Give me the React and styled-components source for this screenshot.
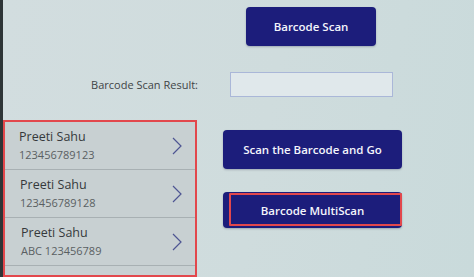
import styled, { createGlobalStyle } from 'styled-components'

const Global = createGlobalStyle`
  html, body {
    margin: 0;
    padding: 0;
    background: #cfdcdd;
  }
  * { box-sizing: border-box; }
`

const Screen = styled.div`
  width: 474px;
  height: 277px;
  overflow: hidden;
  background: linear-gradient(100deg, #d2dddf 0%, #cfdcdd 55%, #c9dadb 100%);
  border-left: 3px solid #2e3537;
  font-family: "Open Sans", "Noto Sans", sans-serif;
  display: flex;
  flex-direction: column;
`

const TopRow = styled.div`
  padding: 7px 0 0 243px;
`

const Button = styled.button`
  display: flex;
  align-items: center;
  justify-content: center;
  width: ${(p) => p.$w}px;
  height: ${(p) => p.$h}px;
  background: #1c1d7b;
  color: #f4f5fb;
  border: none;
  border-radius: 4px;
  font-family: inherit;
  font-size: 11.5px;
  font-weight: 600;
  padding: 0;
  position: relative;
  box-shadow: 0 1px 2px rgba(20, 25, 60, 0.25);
`

const Highlight = styled.span`
  position: absolute;
  left: 6px;
  right: 0;
  top: 1px;
  bottom: 2px;
  border: 2px solid #e2474c;
  border-radius: 1px;
  pointer-events: none;
`

const ResultRow = styled.div`
  display: grid;
  grid-template-columns: 195px 163px;
  column-gap: 32px;
  align-items: center;
  margin-top: 26px;
  height: 25px;
`

const Label = styled.span`
  text-align: right;
  font-size: 11px;
  color: #3f4547;
`

const ResultBox = styled.div`
  height: 25px;
  background: #e0e8eb;
  border: 1.5px solid #aab7d8;
`

const Bottom = styled.div`
  display: flex;
  margin-top: 23px;
`

const Gallery = styled.div`
  width: 194px;
  height: 157px;
  border: 2px solid #e2474c;
  background: #c8d0d2;
  display: flex;
  flex-direction: column;
  overflow: hidden;
`

const Item = styled.div`
  flex: 0 0 48px;
  display: flex;
  align-items: center;
  justify-content: space-between;
  padding: 0 12px 0 ${(p) => 14 + p.$shift}px;
  border-bottom: 1px solid #a8b0b3;
`

const ItemText = styled.div`
  display: flex;
  flex-direction: column;
  gap: 2px;
`

const Name = styled.span`
  font-size: 12.5px;
  color: #35393b;
  line-height: 16px;
`

const Code = styled.span`
  font-size: 11px;
  color: #5a6062;
  line-height: 15px;
`

const RightCol = styled.div`
  display: flex;
  flex-direction: column;
  gap: 23px;
  padding: 10px 0 0 26px;
`

const Chevron = () => (
  <svg width="12" height="18" viewBox="0 0 12 18">
    <path d="M2 1 L10 9 L2 17" fill="none" stroke="#4e5593" strokeWidth="1.2" />
  </svg>
)

const items = [
  { name: 'Preeti Sahu', code: '123456789123', shift: 0 },
  { name: 'Preeti Sahu', code: '123456789128', shift: 1 },
  { name: 'Preeti Sahu', code: 'ABC 123456789', shift: 2 },
]

export default function App() {
  return (
    <>
      <Global />
      <Screen>
        <TopRow>
          <Button $w={130} $h={39}>Barcode Scan</Button>
        </TopRow>
        <ResultRow>
          <Label>Barcode Scan Result:</Label>
          <ResultBox />
        </ResultRow>
        <Bottom>
          <Gallery>
            {items.map((it, i) => (
              <Item key={i} $shift={it.shift}>
                <ItemText>
                  <Name>{it.name}</Name>
                  <Code>{it.code}</Code>
                </ItemText>
                <Chevron />
              </Item>
            ))}
            <Item $shift={0} />
          </Gallery>
          <RightCol>
            <Button $w={179} $h={39}>Scan the Barcode and Go</Button>
            <Button $w={179} $h={36}>
              Barcode MultiScan
              <Highlight />
            </Button>
          </RightCol>
        </Bottom>
      </Screen>
    </>
  )
}
